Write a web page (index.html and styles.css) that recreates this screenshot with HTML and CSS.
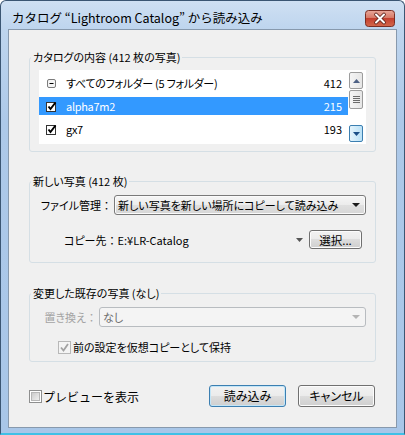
FILE: index.html
```html
<!DOCTYPE html>
<html lang="ja">
<head>
<meta charset="utf-8">
<title>カタログから読み込み</title>
<link rel="stylesheet" href="styles.css">
</head>
<body>
<div class="window">
  <div class="titlebar">
    <span class="title">カタログ “Lightroom Catalog” から読み込み</span>
    <span class="close">
      <svg width="30" height="17" viewBox="0 0 30 17">
        <defs>
          <linearGradient id="cg" x1="0" y1="0" x2="0" y2="1">
            <stop offset="0" stop-color="#e9a99b"/>
            <stop offset="0.45" stop-color="#d77a68"/>
            <stop offset="0.5" stop-color="#c4402f"/>
            <stop offset="1" stop-color="#d3684c"/>
          </linearGradient>
        </defs>
        <rect x="0.5" y="0.5" width="29" height="16" rx="3" fill="url(#cg)" stroke="#7a2e24"/>
        <path d="M11 4.5 L19 12.5 M19 4.5 L11 12.5" stroke="#5a2018" stroke-width="3.6" stroke-linecap="round"/>
        <path d="M11 4.5 L19 12.5 M19 4.5 L11 12.5" stroke="#ffffff" stroke-width="2" stroke-linecap="round"/>
      </svg>
    </span>
  </div>
  <div class="client">
    <fieldset class="group g1">
      <legend>カタログの内容 (412 枚の写真)</legend>
      <div class="list">
        <div class="rows">
          <div class="row">
            <svg class="ico" width="11" height="11" viewBox="0 0 11 11"><rect x="1.5" y="1.5" width="8" height="8" rx="1.5" fill="#f4f4f4" stroke="#7c7c7c"/><path d="M3.5 5.5 H7.5" stroke="#000" stroke-width="1"/></svg>
            <span class="name">すべてのフォルダー (5 フォルダー)</span><span class="count">412</span>
          </div>
          <div class="row sel">
            <svg class="ico" width="11" height="11" viewBox="0 0 11 11"><rect x="0.5" y="1.5" width="9" height="9" fill="#fff" stroke="#333"/><path d="M2.5 5.5 L4.5 8 L9.5 1.5" fill="none" stroke="#000" stroke-width="2"/></svg>
            <span class="name">alpha7m2</span><span class="count">215</span>
          </div>
          <div class="row">
            <svg class="ico" width="11" height="11" viewBox="0 0 11 11"><rect x="0.5" y="1.5" width="9" height="9" fill="#fff" stroke="#333"/><path d="M2.5 5.5 L4.5 8 L9.5 1.5" fill="none" stroke="#000" stroke-width="2"/></svg>
            <span class="name">gx7</span><span class="count">193</span>
          </div>
        </div>
        <div class="scrollbar">
          <span class="sb-btn"><svg width="7" height="4" viewBox="0 0 7 4"><path d="M0 4 L3.5 0 L7 4 Z" fill="#4d6185"/></svg></span>
          <span class="sb-btn thumb"><svg width="7" height="7" viewBox="0 0 7 7"><path d="M0 0.5 H7 M0 2.5 H7 M0 4.5 H7 M0 6.5 H7" stroke="#6b6b6b" stroke-width="1"/></svg></span>
          <span class="sb-track"></span>
          <span class="sb-btn hover"><svg width="7" height="4" viewBox="0 0 7 4"><path d="M0 0 L7 0 L3.5 4 Z" fill="#1b4f87"/></svg></span>
        </div>
      </div>
    </fieldset>

    <fieldset class="group g2">
      <legend>新しい写真 (412 枚)</legend>
      <div class="field-row">
        <span class="lbl lbl-file">ファイル管理<span class="colon">：</span></span>
        <div class="combo">
          <span class="combo-text">新しい写真を新しい場所にコピーして読み込み</span>
          <svg width="8" height="4" viewBox="0 0 8 4"><path d="M0 0 H8 L4 4 Z" fill="#1a1a1a"/></svg>
        </div>
      </div>
      <div class="field-row dest">
        <span class="dest-text">コピー先<span class="colon">：</span>E:¥LR-Catalog</span>
        <svg class="dest-arrow" width="7" height="4" viewBox="0 0 7 4"><path d="M0 0 H7 L3.5 4 Z" fill="#555"/></svg>
        <button class="btn btn-small" type="button">選択...</button>
      </div>
    </fieldset>

    <fieldset class="group g3 disabled">
      <legend>変更した既存の写真 (なし)</legend>
      <div class="field-row">
        <span class="lbl lbl-rep">置き換え<span class="colon">：</span></span>
        <div class="combo combo-dis">
          <span class="combo-text">なし</span>
          <svg width="8" height="4" viewBox="0 0 8 4"><path d="M0 0 H8 L4 4 Z" fill="#b4b4b4"/></svg>
        </div>
      </div>
      <div class="check-row">
        <svg class="cb" width="13" height="13" viewBox="0 0 13 13"><rect x="0.5" y="0.5" width="12" height="12" fill="#f4f4f4" stroke="#b8b8b8"/><path d="M3 6.5 L5.5 9.5 L10 3" fill="none" stroke="#a2a2a2" stroke-width="1.8"/></svg>
        <span class="check-text">前の設定を仮想コピーとして保持</span>
      </div>
    </fieldset>

    <div class="footer">
      <label class="preview">
        <svg class="cb" width="13" height="13" viewBox="0 0 13 13"><defs><linearGradient id="pg" x1="0" y1="0" x2="1" y2="1"><stop offset="0" stop-color="#c9c9c9"/><stop offset="1" stop-color="#f2f2f2"/></linearGradient></defs><rect x="0.5" y="0.5" width="12" height="12" fill="#fff" stroke="#8e8f8f"/><rect x="2.5" y="2.5" width="8" height="8" fill="url(#pg)" stroke="#b6b6b6"/></svg>
        <span>プレビューを表示</span>
      </label>
      <button class="btn btn-big default" type="button">読み込み</button>
      <button class="btn btn-big" type="button">キャンセル</button>
    </div>
  </div>
</div>
</body>
</html>
```

FILE: styles.css
```css
* { box-sizing: border-box; }
html, body { margin: 0; padding: 0; }
body {
  width: 405px;
  height: 435px;
  overflow: hidden;
  background: #ffffff;
  font-family: "Noto Sans CJK JP", "Noto Sans", sans-serif;
  font-size: 11px;
  color: #000;
  font-feature-settings: "palt";
}
.window {
  width: 405px;
  height: 435px;
  border: 1px solid #3b5673;
  border-bottom: 2px solid #3fc0e6;
  border-radius: 6px 6px 0 0;
  background: linear-gradient(180deg, #cfe0f3 0, #bed5ee 28px, #adc9e9 120px, #a8c6e8 100%);
  padding: 0 7px 5px;
  display: flex;
  flex-direction: column;
}
.titlebar {
  height: 28px;
  flex: none;
  display: flex;
  justify-content: space-between;
  align-items: flex-start;
}
.title {
  margin-top: 9px;
  padding-left: 4px;
  line-height: 16px;
  font-size: 12.5px;
  color: #000;
  white-space: nowrap;
  font-feature-settings: normal;
}
.close {
  display: block;
  width: 30px;
  height: 17px;
  margin-top: 9px;
  margin-right: 2px;
}
.close svg { display: block; }
.client {
  flex: 1;
  border: 1px solid #8799ad;
  background: #f0f0f0;
  display: flex;
  flex-direction: column;
}
.group {
  margin: 0 20px;
  border: 1px solid #d5dfe5;
  border-radius: 3px;
  min-width: 0;
  padding: 5px 9px 7px;
}
.group legend {
  padding: 0 2px;
  margin-left: -8px;
  line-height: 16px;
}
.g1 { margin-top: 19px; }
.g2 { margin-top: 21px; padding: 6px 9px 13px; }
.g3 { margin-top: 22px; padding: 6px 9px 7px; }
.colon { font-feature-settings: normal; }

.list {
  height: 74px;
  background: #fff;
  display: flex;
  gap: 1px;
  padding: 2px 3px 2px 0;
}
.rows {
  flex: 1;
  padding-top: 2px;
  display: flex;
  flex-direction: column;
  gap: 5px;
}
.row {
  height: 18px;
  display: flex;
  align-items: center;
  padding: 0 6px 0 7px;
}
.row.sel { background: #3399ff; color: #fff; }
.row .ico { flex: none; margin-right: 9px; }
.name { flex: 1; white-space: nowrap; letter-spacing: -0.3px; }
.count { text-align: right; }

.scrollbar {
  width: 14px;
  display: flex;
  flex-direction: column;
}
.sb-btn {
  height: 17px;
  flex: none;
  border: 1px solid #9c9c9c;
  border-radius: 2px;
  background: linear-gradient(90deg, #f5f5f5, #e6e6e6);
  display: flex;
  align-items: center;
  justify-content: center;
}
.sb-btn svg { display: block; }
.sb-btn.thumb { height: 19px; margin-top: 1px; }
.sb-track { flex: 1; }
.sb-btn.hover {
  border-color: #3c7fb1;
  background: linear-gradient(90deg, #e5f4fc, #b9e1f7);
}

.field-row {
  height: 19px;
  display: flex;
  align-items: center;
}
.lbl { flex: none; text-align: right; white-space: nowrap; }
.lbl-file { width: 73px; }
.lbl-rep { width: 58px; color: #a3a3a3; margin-right: 2px; }
.combo {
  flex: 1;
  height: 20px;
  border: 1px solid #7a7a7a;
  border-radius: 3px;
  background: linear-gradient(180deg, #f6f6f6 0, #ececec 50%, #e0e0e0 50%, #d6d6d6 100%);
  box-shadow: inset 0 0 0 1px #fbfbfb;
  display: flex;
  align-items: center;
  padding: 0 5px 0 3px;
  margin-left: 2px;
}
.combo-text { flex: 1; white-space: nowrap; }
.combo svg { display: block; }
.combo-dis {
  margin-left: 0;
  border-color: #b8bcc0;
  background: #f4f4f4;
  box-shadow: none;
  color: #6d6d6d;
}
.dest {
  margin-top: 16px;
  padding-left: 25px;
  padding-right: 4px;
}
.dest-text { flex: 1; white-space: nowrap; }
.dest-arrow { display: block; margin-right: 6px; }
.btn {
  font-family: "Noto Sans CJK JP", "Noto Sans", sans-serif;
  font-size: 12px;
  font-feature-settings: "palt";
  color: #000;
  border: 1px solid #707070;
  border-radius: 3px;
  background: linear-gradient(180deg, #f2f2f2 0, #ebebeb 50%, #dddddd 50%, #cfcfcf 100%);
  box-shadow: inset 0 0 0 1px #fcfcfc;
  padding: 0;
  margin: 0;
  line-height: 16px;
}
.btn-small { width: 53px; height: 19px; font-size: 11.5px; }
.btn-big { width: 77px; height: 22px; }
.default {
  border-color: #3c7fb1;
  box-shadow: inset 0 0 0 1px #c3e6f8;
}
.check-row {
  margin-top: 14px;
  height: 14px;
  padding-left: 19px;
  display: flex;
  align-items: center;
  color: #000;
}
.cb { display: block; flex: none; }
.check-text { margin-left: 2px; white-space: nowrap; }

.footer {
  margin: 23px 21px 0 20px;
  height: 22px;
  display: flex;
  align-items: center;
  gap: 12px;
}
.preview {
  flex: 1;
  display: flex;
  align-items: center;
  font-size: 12px;
}
.preview span { margin-left: 1px; font-feature-settings: normal; }
```
